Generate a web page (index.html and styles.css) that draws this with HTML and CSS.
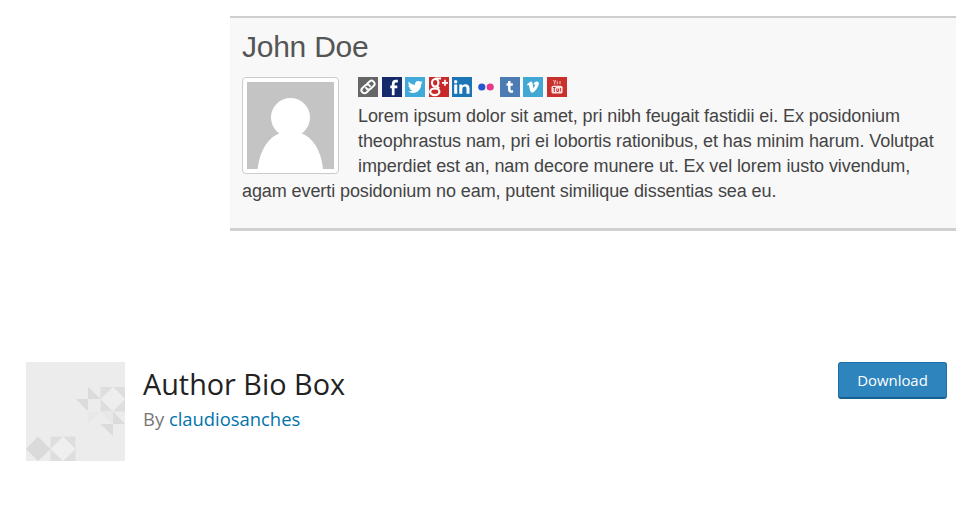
FILE: index.html
```html
<!DOCTYPE html>
<html lang="en">
<head>
  <meta charset="utf-8">
  <title>Author Bio Box</title>
  <link rel="stylesheet" href="styles.css">
</head>
<body>

  <div class="author-box">
    <h3 class="author-name">John Doe</h3>
    <div class="author-avatar">
      <svg viewBox="0 0 87 87">
        <rect width="87" height="87" fill="#c4c4c4"/>
        <circle cx="43.5" cy="35.5" r="19.5" fill="#fff"/>
        <path d="M10.5 87C13 67 22 55 33 51H54C65 55 74 67 76 87Z" fill="#fff"/>
      </svg>
    </div>
    <div class="author-social">
      <svg viewBox="0 0 20 20">
        <rect width="20" height="20" fill="#666"/>
        <g transform="rotate(-42 10 10)" fill="none" stroke="#fff" stroke-width="1.9" stroke-linecap="round">
          <path d="M8.5 13H5.2a3 3 0 0 1 0-6h4a3 3 0 0 1 2.8 3.8"/>
          <path d="M11.500 7h3.3a3 3 0 0 1 0 6h-4a3 3 0 0 1-2.8-3.8"/>
        </g>
      </svg>
      <svg viewBox="0 0 20 20">
        <rect width="20" height="20" fill="#15296b"/>
        <path d="M15.8 4.2h-2c-2.2 0-2.600 1.300-2.600 3v11M8.3 9.8h7" fill="none" stroke="#fff" stroke-width="2.7"/>
      </svg>
      <svg viewBox="0 0 20 20">
        <rect width="20" height="20" fill="#40aadb"/>
        <path d="M3.7 4.8c1.8 2 3.8 3 6.3 3.1-.4-2.3 1-4 3-4 1 0 1.7.3 2.3.9l2-.7-1.2 1.8 1.6-.4-1.5 1.6c.1 5-3.5 8.9-8.3 8.9-1.9 0-3.6-.5-5-1.4 1.7.1 3.2-.3 4.4-1.3-1.5-.1-2.4-.9-2.8-2h1.3c-1.5-.5-2.4-1.5-2.4-3l1.3.4c-1.3-1-1.7-2.5-1-3.9z" fill="#fff"/>
      </svg>
      <svg viewBox="0 0 20 20">
        <rect width="20" height="20" fill="#c82a2c"/>
        <g fill="none" stroke="#fff">
          <ellipse cx="6.2" cy="5.8" rx="3.2" ry="3.8" stroke-width="2.2"/>
          <path d="M6 1.5h6M7.5 9l2.8 2.6" stroke-width="2"/>
          <ellipse cx="5.8" cy="14.8" rx="4.6" ry="3.3" stroke-width="2.2"/>
          <path d="M16 2.8v6M13 5.8h6" stroke-width="1.7"/>
        </g>
      </svg>
      <svg viewBox="0 0 20 20">
        <rect width="20" height="20" fill="#1c75b5"/>
        <path d="M2.2 7.5h3v9.3h-3zM7.3 7.5h2.9v1.3c.8-1.1 1.8-1.6 3.3-1.6 2.9 0 4 1.7 4 4.4v5.2h-3v-4.9c0-1.5-.5-2.3-1.8-2.3-1.5 0-2.4 1-2.4 2.6v4.6h-3z" fill="#fff"/>
        <circle cx="3.7" cy="4.7" r="1.7" fill="#fff"/>
      </svg>
      <svg viewBox="0 0 20 20">
        <circle cx="5.8" cy="10" r="3.6" fill="#2457cf"/>
        <circle cx="14.2" cy="10" r="3.6" fill="#e5388e"/>
      </svg>
      <svg viewBox="0 0 20 20">
        <rect width="20" height="20" fill="#4c7cb3"/>
        <path d="M9.3 4v8.8c0 1.6 1.3 2 3.7 1.4M6.5 7.6h6.3" fill="none" stroke="#fff" stroke-width="2.5"/>
      </svg>
      <svg viewBox="0 0 20 20">
        <rect width="20" height="20" fill="#41a8d4"/>
        <path d="M4 7.3l3.4-2.6c1.6-.5 2 .7 2.3 2.5l.7 4c1.4-1.6 2-3 1.4-3.7-.4-.4-1-.2-1.5 0 .8-2.2 2-3.2 3.6-3.1 1.9.1 2.4 1.6 1.7 3.6-.9 2.6-3.2 6-5.2 7.3-1.7 1-2.7.1-3.3-1.7L5.8 8.100l-1.1.5z" fill="#fff"/>
      </svg>
      <svg viewBox="0 0 20 20">
        <rect width="20" height="20" fill="#c9302c"/>
        <path d="M6.5 3l1.2 2.2L9 3M7.7 5v2.5M10.3 4.3v3M13 4v3.2" fill="none" stroke="#f3c3c0" stroke-width="1"/>
        <rect x="4.5" y="8.7" width="11" height="7.8" rx="1.5" fill="#fbe4e2"/>
        <path d="M6 10.5h2.6M7.3 10.5v4.5M9.8 11.5v3h1.6v-3M13.4 11v3.5" fill="none" stroke="#c9302c" stroke-width="1"/>
      </svg>
    </div>
    <p class="author-bio">
      Lorem ipsum dolor sit amet, pri nibh feugait fastidii ei. Ex posidonium<br>
      theophrastus nam, pri ei lobortis rationibus, et has minim harum. Volutpat<br>
      imperdiet est an, nam decore munere ut. Ex vel lorem iusto vivendum,<br>
      agam everti posidonium no eam, putent similique dissentias sea eu.
    </p>
  </div>

  <div class="plugin-header">
    <svg class="plugin-icon" viewBox="0 0 99 99">
      <rect width="99" height="99" fill="#ececec"/>
      <path d="M0 87l12-12.5L24.5 87 12 99z" fill="#dadada"/>
      <path d="M24.5 74.5H49.5V99H24.5z" fill="#dedede"/>
      <path d="M24.5 87L37 74.5 49.5 87 37 99z" fill="#efefef"/>
      <path d="M74.5 25H99v24.5H74.5z" fill="#dedede"/>
      <path d="M74.5 37L87 25l12 12-12 12.5z" fill="#eee"/>
      <path d="M62 25l12.5 12H62zM50 37h12v12zM87 49.5L99 62H87zM74.5 62H87v12z" fill="#dbdbdb"/>
      <path d="M74.5 49.5H87V62zM62 49.5h12.5L62 62z" fill="#e8e8e8"/>
    </svg>
    <div class="plugin-info">
      <h1>Author Bio Box</h1>
      <span class="byline">By <a href="#">claudiosanches</a></span>
    </div>
    <a class="download" href="#">Download</a>
  </div>

</body>
</html>
```
FILE: styles.css
```css
body {
  margin: 0;
  padding: 16px 13px 0 26px;
  background-color: #fff;
  font-family: "Open Sans", sans-serif;
}

.author-box {
  box-sizing: border-box;
  width: 726px;
  height: 215px;
  margin-left: 204px;
  padding: 0 12px;
  border-top: 2px solid #cecece;
  border-bottom: 3px solid #d0d0d0;
  background-color: #f8f8f8;
  color: #444;
  font-family: "Liberation Sans", Arial, sans-serif;
}

.author-name {
  box-sizing: border-box;
  height: 48px;
  margin: 0;
  padding-top: 11px;
  color: #555;
  font-size: 30px;
  font-weight: normal;
  letter-spacing: -0.25px;
  line-height: 36px;
}

.author-avatar {
  float: left;
  box-sizing: border-box;
  width: 97px;
  height: 97px;
  margin: 11px 19px 0 0;
  padding: 4px;
  border: 1px solid #ccc;
  border-radius: 4px;
  background-color: #fff;
}

.author-avatar svg {
  display: block;
  width: 87px;
  height: 87px;
}

.author-social {
  display: flex;
  gap: 3.6px;
  padding-top: 11px;
}

.author-social svg {
  width: 20px;
  height: 20px;
}

.author-bio {
  margin: 7px 0 0;
  font-size: 18px;
  letter-spacing: -0.09px;
  line-height: 25px;
  white-space: nowrap;
}

.plugin-header {
  display: flex;
  align-items: flex-start;
  margin-top: 131px;
}

.plugin-icon {
  width: 99px;
  height: 99px;
}

.plugin-info {
  flex: 1;
  margin-left: 18px;
}

.plugin-info h1 {
  margin: 2px 0 0;
  color: #222;
  font-size: 28.8px;
  font-weight: normal;
  line-height: 40px;
}

.byline {
  display: block;
  color: #777;
  font-size: 18.4px;
  line-height: 29px;
}

.byline a {
  color: #0073aa;
  text-decoration: none;
}

.download {
  box-sizing: border-box;
  width: 109px;
  height: 37px;
  margin-right: 9px;
  border: 1px solid #1d6fa5;
  border-bottom: 2px solid #17618f;
  border-radius: 3px;
  background-color: #2e84bd;
  color: #fff;
  font-size: 14.9px;
  line-height: 35px;
  text-align: center;
  text-decoration: none;
}
```
